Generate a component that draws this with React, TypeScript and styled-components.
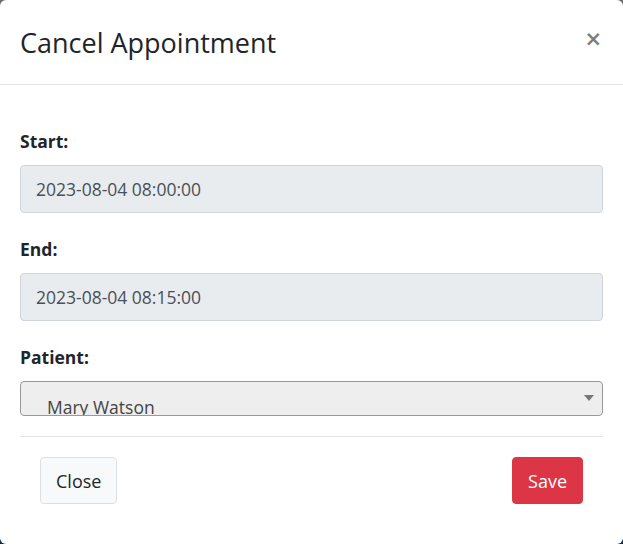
import React from 'react';
import styled, { createGlobalStyle } from 'styled-components';

const GlobalStyle = createGlobalStyle`
  html, body {
    margin: 0;
    padding: 0;
  }
  body {
    background: linear-gradient(180deg, #6b6b6b 0%, #3a4a5e 60%, #0d2a4d 100%);
    font-family: "Open Sans", "Noto Sans", sans-serif;
    color: #212529;
  }
`;

const Modal = styled.div`
  width: 623px;
  height: 544px;
  box-sizing: border-box;
  background: #fff;
  border-radius: 6px;
  display: flex;
  flex-direction: column;
  overflow: hidden;
`;

const Header = styled.header`
  height: 85px;
  box-sizing: border-box;
  display: flex;
  align-items: flex-start;
  justify-content: space-between;
  padding: 24px 20px 0 20px;
  border-bottom: 1px solid #e3e6e9;
`;

const Title = styled.h4`
  margin: 0;
  font-size: 27px;
  font-weight: 400;
  line-height: 38px;
  color: #212529;
`;

const CloseX = styled.button`
  border: 0;
  background: none;
  padding: 0;
  margin: 5px 1px 0 0;
  font-family: "DejaVu Sans", sans-serif;
  font-size: 21px;
  font-weight: 700;
  line-height: 1;
  color: #000;
  opacity: 0.5;
  cursor: pointer;
`;

const Body = styled.div`
  flex: 1;
  padding: 44px 20px 20px 20px;
  display: flex;
  flex-direction: column;
`;

const Group = styled.div`
  display: flex;
  flex-direction: column;
  margin-bottom: 24px;
`;

const Label = styled.label`
  font-size: 17.5px;
  font-weight: 700;
  line-height: 24px;
  margin-bottom: 12px;
`;

const ReadOnlyInput = styled.div`
  height: 48px;
  box-sizing: border-box;
  display: flex;
  align-items: center;
  padding: 0 15px;
  background: #e9ecef;
  border: 1px solid #ced4da;
  border-radius: 4px;
  font-size: 17.5px;
  color: #495057;
`;

const Select = styled.div`
  position: relative;
  height: 35px;
  box-sizing: border-box;
  padding: 14px 26px 0 26px;
  background: #eeeeee;
  border: 1px solid #999;
  border-radius: 4px;
  font-size: 17.5px;
  line-height: 22px;
  color: #444;
  white-space: nowrap;
  overflow: hidden;
`;

const Caret = styled.span`
  position: absolute;
  right: 8px;
  top: 13px;
  width: 0;
  height: 0;
  border-left: 5px solid transparent;
  border-right: 5px solid transparent;
  border-top: 6px solid #777;
`;

const Footer = styled.div`
  margin-top: -4px;
  border-top: 1px solid #e3e6e9;
  padding: 20px;
  display: flex;
  justify-content: space-between;
`;

const Button = styled.button<{ $variant: 'light' | 'danger' }>`
  height: 47px;
  padding: 0 15px;
  border-radius: 4px;
  font-family: "Open Sans", "Noto Sans", sans-serif;
  font-size: 18px;
  cursor: pointer;
  background: ${p => (p.$variant === 'danger' ? '#dc3545' : '#f8f9fa')};
  border: 1px solid ${p => (p.$variant === 'danger' ? '#dc3545' : '#dde0e3')};
  color: ${p => (p.$variant === 'danger' ? '#fff' : '#212529')};
`;

export default function App() {
  return (
    <>
      <GlobalStyle />
      <Modal>
        <Header>
          <Title>Cancel Appointment</Title>
          <CloseX aria-label="Close">×</CloseX>
        </Header>
        <Body>
          <Group>
            <Label>Start:</Label>
            <ReadOnlyInput>2023-08-04 08:00:00</ReadOnlyInput>
          </Group>
          <Group>
            <Label>End:</Label>
            <ReadOnlyInput>2023-08-04 08:15:00</ReadOnlyInput>
          </Group>
          <Group>
            <Label>Patient:</Label>
            <Select>
              Mary Watson
              <Caret />
            </Select>
          </Group>
          <Footer>
            <Button $variant="light">Close</Button>
            <Button $variant="danger">Save</Button>
          </Footer>
        </Body>
      </Modal>
    </>
  );
}
